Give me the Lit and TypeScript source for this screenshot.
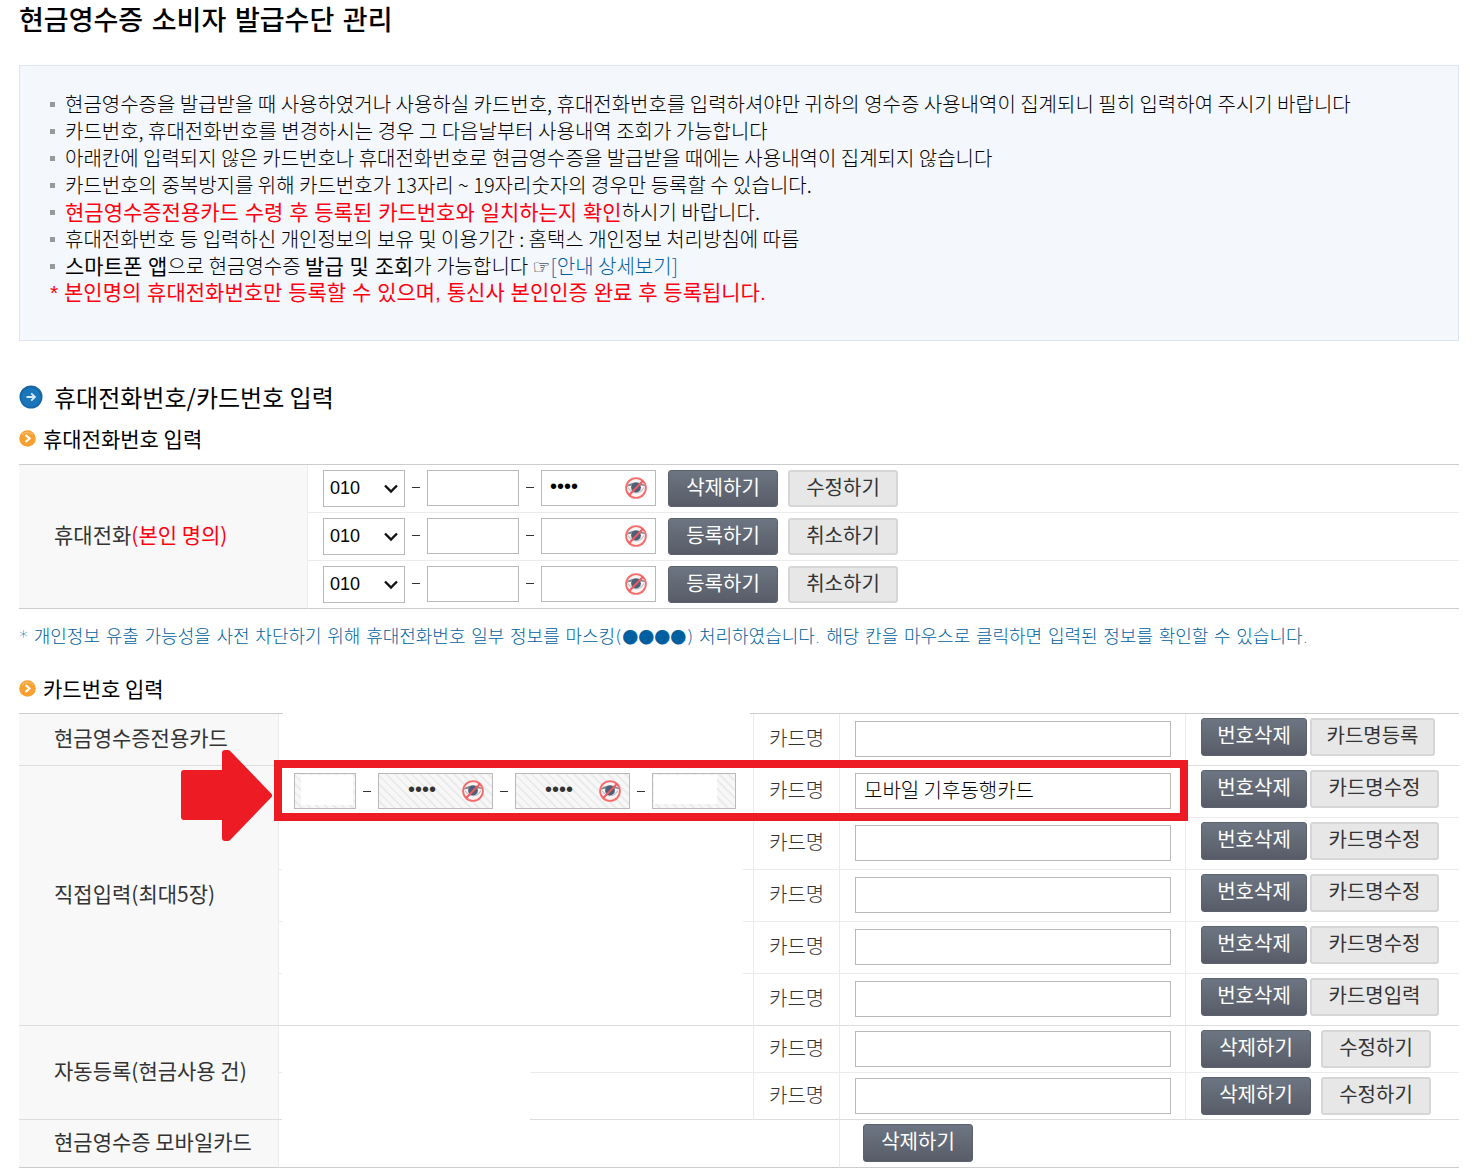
import { LitElement, html, css, nothing } from "lit";
import { customElement } from "lit/decorators.js";

const eye = html`<svg class="eye" viewBox="0 0 22 22" aria-hidden="true">
  <circle cx="11" cy="11" r="9.8" fill="#fdf3f3" />
  <path d="M1 10C4 4.500 17 3.500 21 9.500C17 7.800 6 7.500 1 10Z" fill="#7b8591" />
  <path d="M3 10.500C7 17.500 15 17.500 19 10.500" fill="none" stroke="#b9c0c7" stroke-width="1.200" />
  <circle cx="11" cy="10.500" r="4.900" fill="#4d6076" />
  <circle cx="11" cy="11" r="9.900" fill="none" stroke="#f66a69" stroke-width="1.800" />
  <path d="M4.200 18L17.800 4" stroke="#f05a60" stroke-width="1.800" />
</svg>`;

const chevronIcon = html`<svg class="orange" viewBox="0 0 17 17" aria-hidden="true">
  <circle cx="8.500" cy="8.500" r="8.300" fill="#f8a030" />
  <path d="M3 5C5 1.500 12 1.500 14 5" fill="none" stroke="#fbb860" stroke-width="1.500" />
  <path d="M6.500 5L10.500 8.500L6.500 12" fill="none" stroke="#fff" stroke-width="2.200" />
</svg>`;

interface CardRow {
  head?: string;
  span?: number;
  kind: string;
  value?: string;
  masked?: boolean;
  buttons: [string, string];
  size: string;
}

const cards: CardRow[] = [
  { head: "현금영수증전용카드", span: 1, kind: "tall group", buttons: ["번호삭제", "카드명등록"], size: "reg" },
  { head: "직접입력(최대5장)", span: 5, kind: "tall", masked: true, value: "모바일 기후동행카드", buttons: ["번호삭제", "카드명수정"], size: "mod" },
  { kind: "tall", buttons: ["번호삭제", "카드명수정"], size: "mod" },
  { kind: "tall", buttons: ["번호삭제", "카드명수정"], size: "mod" },
  { kind: "tall", buttons: ["번호삭제", "카드명수정"], size: "mod" },
  { kind: "tall group full", buttons: ["번호삭제", "카드명입력"], size: "mod" },
  { head: "자동등록(현금사용 건)", span: 2, kind: "short half", buttons: ["삭제하기", "수정하기"], size: "std" },
  { kind: "short half group", buttons: ["삭제하기", "수정하기"], size: "std" },
];

@customElement("app-root")
export class AppRoot extends LitElement {
  static styles = css`
    :host {
      display: block;
      padding: 0 17px 0 19px;
      background: #fff;
      color: #000;
      font: 300 20px/27px "Noto Sans CJK KR", sans-serif;
      overflow: hidden;
    }
    * { box-sizing: border-box; }
    h1, h2, h3, p, ul { margin: 0; padding: 0; }
    h1 { font: 500 27px/42px "DejaVu Sans", "Noto Sans CJK KR", sans-serif; }
    .notice {
      margin-top: 23px;
      padding: 24px 30px 34px;
      background: #f4f7fc;
      border: 1px solid #dde5ee;
    }
    .notice ul { list-style: none; }
    .notice li { height: 27px; padding-left: 15px; background: linear-gradient(#999, #999) 0 12px / 5px 5px no-repeat; white-space: nowrap; }
    .notice strong, .warn { font: 400 21px/20px "Liberation Sans", "Noto Sans CJK KR", sans-serif; }
    .notice .warn { line-height: 27px; }
    .red { color: #ff0010; }
    .hand { font: 700 20px/20px "DejaVu Sans", sans-serif; }
    a { color: #005f9e; text-decoration: none; }
    h2 { display: flex; align-items: center; gap: 11px; margin-top: 38px; font-size: 24px; line-height: 36px; font-weight: 400; }
    h3 { display: flex; align-items: center; gap: 7px; font-size: 21px; line-height: 32px; font-weight: 400; }
    .h3a { margin-top: 7px; }
    .h3b { margin-top: 22px; }
    .blue { width: 24px; height: 24px; }
    .orange { width: 17px; height: 17px; }
    table { width: 100%; table-layout: fixed; border-collapse: separate; border-spacing: 0; border-top: 1px solid #ccc; }
    .phones { margin-top: 10px; }
    th, td { padding: 0; text-align: left; font-weight: 300; border-bottom: 1px solid #ebebeb; color: #333; }
    th { background: #f8f8f8; font-size: 21px; font-weight: 400; padding: 0 0 4px 35px; border-right: 1px solid #ebebeb; border-bottom-color: #ddd; white-space: nowrap; }
    .phones tr { height: 48px; }
    .phones th, .phones tr:last-child td, .cards .mobile th, .cards .mobile td { border-bottom-color: #ccc; }
    .c-phone { width: 289px; }
    .line { display: flex; align-items: center; }
    .phones .line { padding-left: 15px; align-items: flex-start; }
    input, select, button { font: inherit; margin: 0; border-radius: 0; }
    select, input { height: 36px; background: #fff; border: 1px solid #b9b9b9; color: #000; padding: 0 8px; min-width: 0; }
    .pick { position: relative; display: flex; }
    select { appearance: none; width: 82px; height: 37px; padding: 0 6px 2px; font: 18px "Liberation Sans", sans-serif; }
    .pick svg { position: absolute; right: 6px; top: 13px; width: 16px; height: 11px; pointer-events: none; }
    .dash { width: 8px; height: 1px; margin: 0 7px; background: #333; }
    .phones .dash { margin-top: 17px; }
    .w92 { width: 92px; }
    .secret { position: relative; display: flex; }
    .secret input { width: 115px; font: 20px "Liberation Sans", sans-serif; padding: 0 36px 4px 8px; }
    .eye { position: absolute; right: 9px; top: 7px; width: 22px; height: 22px; }
    button { height: 38px; padding: 0 0 4px; border-radius: 3px; font-size: 20px; font-weight: 400; line-height: 30px; text-align: center; white-space: nowrap; }
    .dark { background: linear-gradient(#6c7682, #585c68); border: 1px solid #5b626e; color: #fff; }
    .light { background: #e7e7e7; border: 2px solid #d6d6d6; color: #333; }
    .std { display: flex; gap: 10px; }
    .std button { width: 110px; }
    .phones .std { margin-left: 12px; }
    .phones button { height: 37px; }
    .reg, .mod { display: flex; gap: 3px; }
    .reg .dark, .mod .dark { width: 106px; }
    .reg .light { width: 125px; }
    .mod .light { width: 129px; }
    .note { margin-top: 14px; font: 300 18px/27px "DejaVu Sans", "Noto Sans CJK KR", sans-serif; color: #005f9e; }
    .dots { font-family: "Noto Sans CJK KR", sans-serif; font-size: 16px; line-height: 20px; }
    .wrap { position: relative; margin-top: 9px; }
    .c-head { width: 260px; }
    .c-num { width: 475px; }
    .c-label { width: 86px; }
    .c-name { width: 346px; }
    .tall { height: 52px; }
    .short { height: 47px; }
    .cards { border-top: 0; background: linear-gradient(#ccc, #ccc) 0 0 / 264px 1px no-repeat, linear-gradient(#ccc, #ccc) 731px 0 / 100% 1px no-repeat; padding-top: 1px; }
    .cards td { border-right: 1px solid #ebebeb; }
    .cards td:last-child { border-right: 0; padding: 4px 0 0 15px; vertical-align: top; }
    .cards .group td { border-bottom-color: #ddd; }
    .cards .num { --edge: #ebebeb; border-bottom: 0; background: linear-gradient(var(--edge), var(--edge)) 0 100% / 3px 1px no-repeat, linear-gradient(var(--edge), var(--edge)) 100% 100% / 10px 1px no-repeat; }
    .cards .group .num { --edge: #ddd; }
    .cards .half .num { background-size: 3px 1px, 223px 1px; }
    .cards .full .num { background-size: 100% 1px; }
    .cards .tall.group:first-child .num { background-size: 0 0; }
    .label { padding: 0 0 4px 15px; }
    .name { padding: 0 0 1px 15px; }
    .name input { display: block; width: 316px; padding-bottom: 4px; }
    .num .line { padding: 0 0 2px 15px; }
    .num input { background: repeating-linear-gradient(45deg, #f7f7f7 0 4px, #ebebeb 4px 6px); color: #333; }
    .num .secret input { width: 115px; padding-left: 29px; }
    .num .first { width: 62px; background: linear-gradient(#fff, #fff) 6px 1px / 52px 30px no-repeat, repeating-linear-gradient(45deg, #f7f7f7 0 4px, #ebebeb 4px 6px); }
    .num .last { width: 84px; background: linear-gradient(#fff, #fff) 1px 1px / 63px 29px no-repeat, repeating-linear-gradient(45deg, #f7f7f7 0 4px, #ebebeb 4px 6px); }
    .mobile { height: 48px; }
    .cards .mobile td:last-child { padding-left: 23px; }
    .frame { position: absolute; left: 255px; top: 47px; width: 914px; height: 61px; border: 8px solid #ed1c24; pointer-events: none; }
    .arrow { position: absolute; left: 162px; top: 37px; width: 91px; height: 91px; pointer-events: none; }
  `;

  private buttons(pair: [string, string], size: string) {
    return html`<div class=${size}><button class="dark">${pair[0]}</button><button class="light">${pair[1]}</button></div>`;
  }

  private secret(label: string, filled: boolean, readonly = false) {
    return html`<span class="secret"><input type="password" aria-label=${label} .value=${filled ? "0000" : ""} ?readonly=${readonly} />${eye}</span>`;
  }

  private phone(i: number, pair: [string, string]) {
    return html`<div class="line">
      <span class="pick"><select aria-label="휴대전화 ${i} 앞자리"><option>010</option></select>
        <svg viewBox="0 0 16 11"><path d="M2 2.500L8 8.500L14 2.500" fill="none" stroke="#111" stroke-width="2.400" /></svg></span>
      <span class="dash"></span><input class="w92" aria-label="휴대전화 ${i} 가운데 자리" />
      <span class="dash"></span>${this.secret(`휴대전화 ${i} 끝자리`, i === 1)}
      ${this.buttons(pair, "std")}
    </div>`;
  }

  render() {
    return html`
      <h1>현금영수증 소비자 발급수단 관리</h1>
      <section class="notice">
        <ul>
          <li>현금영수증을 발급받을 때 사용하였거나 사용하실 카드번호, 휴대전화번호를 입력하셔야만 귀하의 영수증 사용내역이 집계되니 필히 입력하여 주시기 바랍니다</li>
          <li>카드번호, 휴대전화번호를 변경하시는 경우 그 다음날부터 사용내역 조회가 가능합니다</li>
          <li>아래칸에 입력되지 않은 카드번호나 휴대전화번호로 현금영수증을 발급받을 때에는 사용내역이 집계되지 않습니다</li>
          <li>카드번호의 중복방지를 위해 카드번호가 13자리 ~ 19자리숫자의 경우만 등록할 수 있습니다.</li>
          <li><strong class="red">현금영수증전용카드 수령 후 등록된 카드번호와 일치하는지 확인</strong>하시기 바랍니다.</li>
          <li>휴대전화번호 등 입력하신 개인정보의 보유 및 이용기간 : 홈택스 개인정보 처리방침에 따름</li>
          <li><strong>스마트폰 앱</strong>으로 현금영수증 <strong>발급 및 조회</strong>가 가능합니다 <span class="hand">☞</span><a href="#guide">[안내 상세보기]</a></li>
        </ul>
        <p class="warn red">* 본인명의 휴대전화번호만 등록할 수 있으며, 통신사 본인인증 완료 후 등록됩니다.</p>
      </section>

      <h2>
        <svg class="blue" viewBox="0 0 24 24" aria-hidden="true"><circle cx="12" cy="12" r="11.500" fill="#1767a6" /><circle cx="12" cy="12.500" r="9.500" fill="#1b75bb" /><path d="M7.500 12H15.500M12.200 8.300L16 12L12.200 15.700" fill="none" stroke="#d5eafa" stroke-width="1.800" /></svg>
        휴대전화번호/카드번호 입력
      </h2>
      <h3 class="h3a">${chevronIcon}휴대전화번호 입력</h3>
      <table class="phones">
        <colgroup><col class="c-phone" /><col /></colgroup>
        <tbody>
          <tr><th rowspan="3" scope="rowgroup">휴대전화<span class="red">(본인 명의)</span></th><td>${this.phone(1, ["삭제하기", "수정하기"])}</td></tr>
          <tr><td>${this.phone(2, ["등록하기", "취소하기"])}</td></tr>
          <tr><td>${this.phone(3, ["등록하기", "취소하기"])}</td></tr>
        </tbody>
      </table>
      <p class="note">* 개인정보 유출 가능성을 사전 차단하기 위해 휴대전화번호 일부 정보를 마스킹(<span class="dots">●●●●</span>) 처리하였습니다. 해당 칸을 마우스로 클릭하면 입력된 정보를 확인할 수 있습니다.</p>

      <h3 class="h3b">${chevronIcon}카드번호 입력</h3>
      <div class="wrap">
        <table class="cards">
          <colgroup><col class="c-head" /><col class="c-num" /><col class="c-label" /><col class="c-name" /><col /></colgroup>
          <tbody>
            ${cards.map((c, i) => html`<tr class=${c.kind}>
              ${c.head ? html`<th scope="rowgroup" rowspan=${c.span}>${c.head}</th>` : nothing}
              <td class="num">${c.masked
                ? html`<div class="line"><input class="first" readonly aria-label="카드번호 첫째 자리" /><span class="dash"></span>${this.secret("카드번호 둘째 자리", true, true)}<span class="dash"></span>${this.secret("카드번호 셋째 자리", true, true)}<span class="dash"></span><input class="last" readonly aria-label="카드번호 넷째 자리" /></div>`
                : nothing}</td>
              <td class="label"><label for="name${i}">카드명</label></td>
              <td class="name"><input id="name${i}" .value=${c.value ?? ""} /></td>
              <td>${this.buttons(c.buttons, c.size)}</td>
            </tr>`)}
            <tr class="mobile">
              <th scope="row">현금영수증 모바일카드</th>
              <td colspan="2"></td>
              <td colspan="2"><div class="std"><button class="dark">삭제하기</button></div></td>
            </tr>
          </tbody>
        </table>
        <div class="frame"></div>
        <svg class="arrow" viewBox="0 0 91 91" aria-hidden="true"><path d="M3 23H44V3H47L88 45.500L47 88H44V67H3Z" fill="#ed1c24" stroke="#ed1c24" stroke-width="6" stroke-linejoin="round" /></svg>
      </div>
    `;
  }
}
